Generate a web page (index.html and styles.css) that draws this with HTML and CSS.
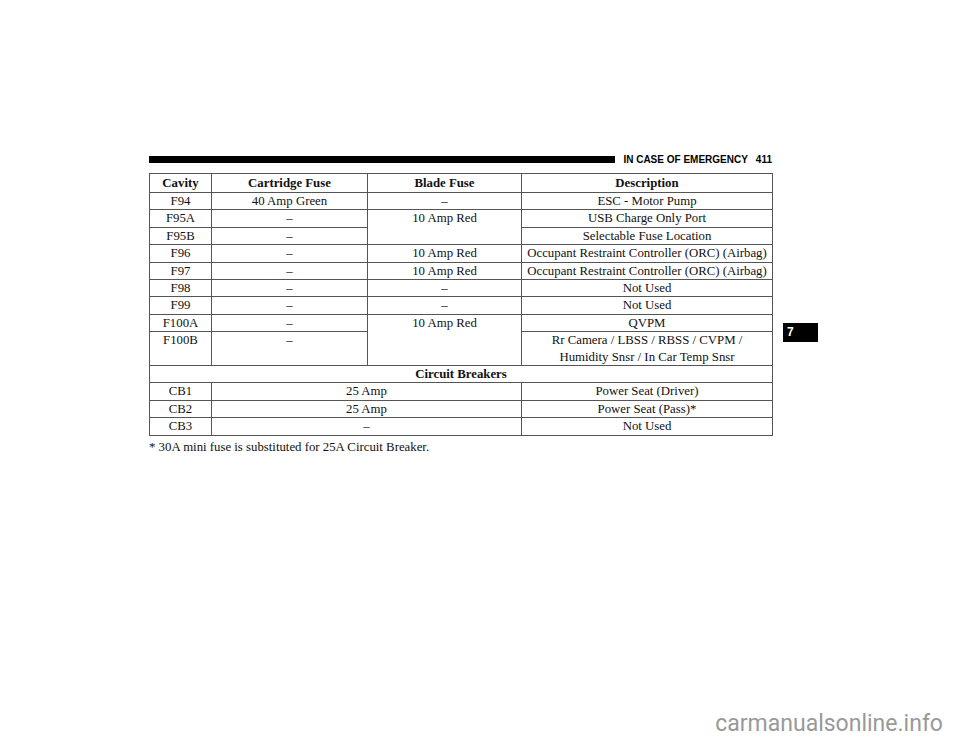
FILE: index.html
```html
<!DOCTYPE html>
<html>
<head>
<meta charset="utf-8">
<link rel="stylesheet" href="styles.css">
</head>
<body>
<div class="page">
  <div class="content-row">
    <div class="main">
      <div class="runhead">
        <div class="bar"></div>
        <div class="section">IN CASE OF EMERGENCY</div>
        <div class="pageno">411</div>
      </div>
      <table class="fuses">
        <colgroup>
          <col class="c1"><col class="c2"><col class="c3"><col class="c4">
        </colgroup>
        <thead>
          <tr><th>Cavity</th><th>Cartridge Fuse</th><th>Blade Fuse</th><th>Description</th></tr>
        </thead>
        <tbody>
          <tr><td>F94</td><td>40 Amp Green</td><td>–</td><td>ESC - Motor Pump</td></tr>
          <tr><td>F95A</td><td>–</td><td rowspan="2" class="top">10 Amp Red</td><td>USB Charge Only Port</td></tr>
          <tr><td>F95B</td><td>–</td><td>Selectable Fuse Location</td></tr>
          <tr><td>F96</td><td>–</td><td>10 Amp Red</td><td>Occupant Restraint Controller (ORC) (Airbag)</td></tr>
          <tr><td>F97</td><td>–</td><td>10 Amp Red</td><td>Occupant Restraint Controller (ORC) (Airbag)</td></tr>
          <tr><td>F98</td><td>–</td><td>–</td><td>Not Used</td></tr>
          <tr><td>F99</td><td>–</td><td>–</td><td>Not Used</td></tr>
          <tr><td>F100A</td><td>–</td><td rowspan="2" class="top">10 Amp Red</td><td>QVPM</td></tr>
          <tr><td class="top">F100B</td><td class="top">–</td><td>Rr Camera / LBSS / RBSS / CVPM /<br>Humidity Snsr / In Car Temp Snsr</td></tr>
          <tr><th colspan="4" class="group">Circuit Breakers</th></tr>
          <tr><td>CB1</td><td colspan="2">25 Amp</td><td>Power Seat (Driver)</td></tr>
          <tr><td>CB2</td><td colspan="2">25 Amp</td><td>Power Seat (Pass)*</td></tr>
          <tr><td>CB3</td><td colspan="2">–</td><td>Not Used</td></tr>
        </tbody>
      </table>
      <p class="note">* 30A mini fuse is substituted for 25A Circuit Breaker.</p>
    </div>
    <div class="tab">7</div>
  </div>
  <div class="watermark">carmanualsonline.info</div>
</div>
</body>
</html>
```
FILE: styles.css
```css
html, body {
  margin: 0;
  padding: 0;
  background: #fff;
}
.page {
  width: 960px;
  height: 742px;
  box-sizing: border-box;
  padding: 156px 0 0 149px;
  display: flex;
  flex-direction: column;
  overflow: hidden;
}
.content-row {
  display: flex;
  align-items: flex-start;
}
.main {
  width: 623px;
}
.runhead {
  display: flex;
  align-items: center;
  height: 7px;
  font-family: "Liberation Sans", Arial, sans-serif;
  font-weight: bold;
  font-size: 10px;
  color: #000;
}
.bar {
  width: 469px;
  height: 7px;
  background: #000;
}
.section {
  margin-left: 8px;
  white-space: nowrap;
}
.pageno {
  margin-left: 8px;
}
.fuses {
  margin-top: 10px;
  width: 623px;
  border-collapse: collapse;
  font-family: "Liberation Serif", "Times New Roman", serif;
  font-size: 12.8px;
  color: #111;
  table-layout: fixed;
  border: 1px solid #444;
}
.c1 { width: 62px; }
.c2 { width: 156px; }
.c3 { width: 154px; }
.c4 { width: 251px; }
.fuses th,
.fuses td {
  border: 1px solid #555;
  padding: 0;
  text-align: center;
  line-height: 16.4px;
  vertical-align: middle;
}
.fuses thead th {
  height: 18px;
  font-weight: bold;
}
.fuses td.top {
  vertical-align: top;
}
.fuses th.group {
  font-weight: bold;
}
.note {
  margin: 3px 0 0 0;
  font-family: "Liberation Serif", "Times New Roman", serif;
  font-size: 12.8px;
  color: #111;
  line-height: 16px;
}
.tab {
  margin-left: 11px;
  margin-top: 167px;
  width: 35px;
  height: 19px;
  background: #000;
  color: #fff;
  font-family: "Liberation Sans", Arial, sans-serif;
  font-weight: bold;
  font-size: 12px;
  line-height: 19px;
  padding-left: 4px;
  box-sizing: border-box;
}
.watermark {
  margin-top: auto;
  align-self: flex-end;
  margin-right: 17px;
  margin-bottom: 5px;
  font-family: Roboto, "Liberation Sans", sans-serif;
  font-size: 23px;
  color: #999;
  line-height: 26px;
}
```
